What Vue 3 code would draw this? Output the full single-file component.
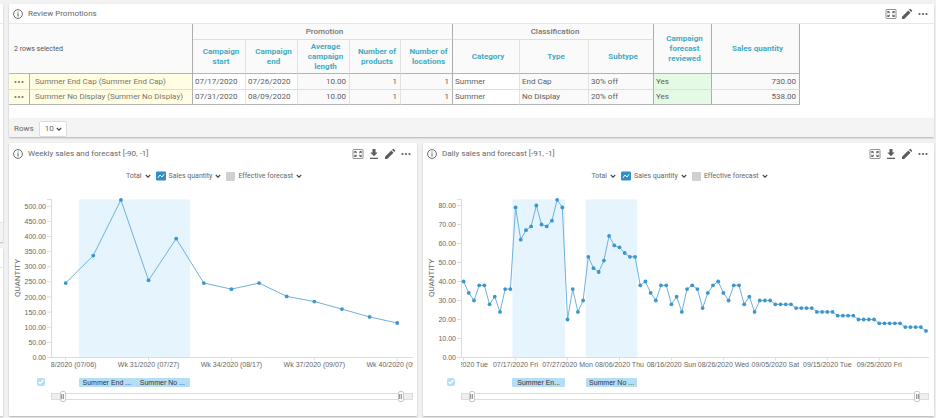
<script setup>
import { ref, reactive, onMounted, onBeforeUnmount } from 'vue'

const rowsPerPage = ref('10')

const columnWidths = [21, 163, 53, 52, 52, 51, 52, 67, 69, 65, 58, 88]

const promotions = [
  {
    name: 'Summer End Cap (Summer End Cap)', start: '07/17/2020', end: '07/26/2020', length: '10.00',
    products: 1, locations: 1, category: 'Summer', type: 'End Cap', subtype: '30% off', reviewed: 'Yes', sales: '730.00',
  },
  {
    name: 'Summer No Display (Summer No Display)', start: '07/31/2020', end: '08/09/2020', length: '10.00',
    products: 1, locations: 1, category: 'Summer', type: 'No Display', subtype: '20% off', reviewed: 'Yes', sales: '538.00',
  },
]

const PLOT_TOP = 17.5
const PLOT_BOTTOM = 175.5
const CHART_HEIGHT = 190

const charts = reactive([
  {
    id: 'weekly',
    title: 'Weekly sales and forecast [-90, -1]',
    width: 408,
    left: 42,
    right: 4,
    domain: [-0.53, 12.57],
    unit: 0.3025,
    yTicks: [0, 50, 100, 150, 200, 250, 300, 350, 400, 450, 500],
    values: [246, 337, 521, 255, 393, 246, 226, 246, 202, 185, 160, 134, 114],
    xTicks: [
      [0, 'Wk 28/2020 (07/06)'],
      [3, 'Wk 31/2020 (07/27)'],
      [6, 'Wk 34/2020 (08/17)'],
      [9, 'Wk 37/2020 (09/07)'],
      [12, 'Wk 40/2020 (09/28)'],
    ],
    bands: [
      { from: 0.48, to: 2.5, label: 'Summer End ...' },
      { from: 2.5, to: 4.5, label: 'Summer No ...' },
    ],
    shown: true,
    range: [2.4, 97.4],
  },
  {
    id: 'daily',
    title: 'Daily sales and forecast [-91, -1]',
    width: 511,
    left: 38,
    right: 5,
    domain: [-0.5, 89.57],
    unit: 1.9,
    yTicks: [0, 10, 20, 30, 40, 50, 60, 70, 80],
    values: [
      40, 34, 30, 38, 38, 28, 32, 24, 36, 36, 79, 62, 67, 69, 80, 70, 69, 72, 83, 79,
      20, 36, 24, 30, 53, 47, 45, 51, 64, 59, 58, 55, 53, 53, 38, 40, 34, 30, 38, 38,
      28, 32, 24, 36, 38, 36, 26, 34, 38, 40, 34, 30, 38, 38, 28, 32, 24, 30, 30, 30,
      28, 28, 28, 28, 26, 26, 26, 26, 24, 24, 24, 24, 22, 22, 22, 22, 20, 20, 20, 20,
      18, 18, 18, 18, 18, 16, 16, 16, 16, 14,
    ],
    xTicks: [
      [0, '07/07/2020 Tue'],
      [10, '07/17/2020 Fri'],
      [20, '07/27/2020 Mon'],
      [30, '08/06/2020 Thu'],
      [40, '08/16/2020 Sun'],
      [50, '08/26/2020 Wed'],
      [60, '09/05/2020 Sat'],
      [70, '09/15/2020 Tue'],
      [80, '09/25/2020 Fri'],
    ],
    bands: [
      { from: 9.4, to: 19.5, label: 'Summer En...' },
      { from: 23.5, to: 33.45, label: 'Summer No ...' },
    ],
    shown: true,
    range: [1.7, 98.1],
  },
])

const plotWidth = (c) => c.width - c.left - c.right
const fraction = (c, i) => (i - c.domain[0]) / (c.domain[1] - c.domain[0])
const xAt = (c, i) => c.left + fraction(c, i) * plotWidth(c)
const yAt = (c, v) => PLOT_BOTTOM - v * c.unit
const linePoints = (c) => c.values.map((v, i) => `${xAt(c, i)},${yAt(c, v)}`).join(' ')

// Each chip's left margin runs from the end of the chip before it.
const chipStyle = (c, n) => {
  const previous = n ? fraction(c, c.bands[n - 1].to) : 0
  const from = fraction(c, c.bands[n].from)
  const to = fraction(c, c.bands[n].to)
  return { marginLeft: `${(from - previous) * 100}%`, width: `${(to - from) * 100}%` }
}

const plots = ref([])
let observer

onMounted(() => {
  const measure = () => plots.value.forEach((el, i) => { charts[i].width = el.clientWidth })
  measure()
  observer = new ResizeObserver(measure)
  plots.value.forEach((el) => observer.observe(el))
})
onBeforeUnmount(() => observer?.disconnect())
</script>

<template>
  <svg class="symbols" aria-hidden="true">
    <symbol id="i-info" viewBox="0 0 12 12">
      <circle cx="6" cy="6" r="4.4" fill="none" stroke="currentColor" stroke-width=".9" />
      <path d="M5.5 5.3h1v3.2h-1zM5.5 3.4h1v1h-1z" fill="currentColor" />
    </symbol>
    <symbol id="i-full" viewBox="0 0 12 12">
      <rect x="1" y="1.5" width="10" height="9" rx=".6" fill="none" stroke="currentColor" stroke-width=".9" opacity=".75" />
      <path d="M2.3 3h2.5L4 3.8l1 1-.7.7-1-1-.9.9zM9.7 3v2.4l-.9-.9-1 1-.8-.7 1-1L7.2 3zM2.3 9V6.600l.9.9 1-1 .8.7-1 1 .8.8zM9.7 9H7.2l.8-.8-1-1 .7-.7 1 1 1-.9z" fill="currentColor" />
    </symbol>
    <symbol id="i-down" viewBox="0 0 12 12">
      <path d="M4.5 1h3v3.5h2.2L6 8.3 2.3 4.5h2.2zM2 9.8h8V11H2z" fill="currentColor" />
    </symbol>
    <symbol id="i-edit" viewBox="0 0 12 12">
      <path d="M1 11V8.8l6.3-6.3 2.2 2.2L3.2 11zM8 1.8l.9-.9q.4-.3.7 0l1.500 1.500q.3.4 0 .7l-.9.9z" fill="currentColor" />
    </symbol>
    <symbol id="i-more" viewBox="0 0 12 12">
      <g fill="currentColor">
        <circle cx="2.5" cy="6" r="1.1" />
        <circle cx="6" cy="6" r="1.1" />
        <circle cx="9.5" cy="6" r="1.1" />
      </g>
    </symbol>
    <symbol id="i-chevron" viewBox="0 0 6 6">
      <path d="M.8 2 3 4.2 5.2 2" fill="none" stroke="currentColor" stroke-width="1.1" />
    </symbol>
    <symbol id="i-series" viewBox="0 0 10 10">
      <rect width="10" height="9" y=".5" rx="1.2" fill="#2f8fc6" />
      <path d="M2 6.800 4 4l2 2 2.200-2.800" fill="none" stroke="#fff" stroke-width="1" />
    </symbol>
  </svg>

  <div class="page">
    <aside class="side">
      <section class="side-panel first"><div class="side-head"></div><div class="side-foot"></div></section>
      <section class="side-panel rest"><div class="side-head"></div></section>
    </aside>

    <main class="content">
      <section class="panel">
        <header class="panel-head ruled">
          <svg class="icon"><use href="#i-info" /></svg>
          <h2>Review Promotions</h2>
          <button class="tool" type="button" aria-label="Full screen"><svg class="icon"><use href="#i-full" /></svg></button>
          <button class="tool" type="button" aria-label="Edit"><svg class="icon"><use href="#i-edit" /></svg></button>
          <button class="tool" type="button" aria-label="More"><svg class="icon"><use href="#i-more" /></svg></button>
        </header>

        <div class="table-wrap">
          <table>
            <colgroup><col v-for="(w, i) in columnWidths" :key="i" :style="{ width: w + 'px' }" /></colgroup>
            <thead>
              <tr class="groups">
                <th class="selected edge base" colspan="2" rowspan="2">2 rows selected</th>
                <th class="edge" colspan="5">Promotion</th>
                <th class="edge" colspan="3">Classification</th>
                <th class="measure edge base" rowspan="2">Campaign forecast reviewed</th>
                <th class="measure edge base" rowspan="2">Sales quantity</th>
              </tr>
              <tr class="fields">
                <th class="measure base">Campaign start</th>
                <th class="measure base">Campaign end</th>
                <th class="measure base">Average campaign length</th>
                <th class="measure base">Number of products</th>
                <th class="measure base edge">Number of locations</th>
                <th class="measure base">Category</th>
                <th class="measure base">Type</th>
                <th class="measure base edge">Subtype</th>
              </tr>
            </thead>
            <tbody>
              <tr v-for="p in promotions" :key="p.name">
                <td class="marked edge action">
                  <button class="row-menu" type="button" :aria-label="'Actions for ' + p.name"><svg class="icon"><use href="#i-more" /></svg></button>
                </td>
                <td class="marked edge name">{{ p.name }}</td>
                <td class="open">{{ p.start }}</td>
                <td class="open">{{ p.end }}</td>
                <td class="num">{{ p.length }}</td>
                <td class="num">{{ p.products }}</td>
                <td class="num edge">{{ p.locations }}</td>
                <td class="open">{{ p.category }}</td>
                <td>{{ p.type }}</td>
                <td class="edge">{{ p.subtype }}</td>
                <td class="reviewed edge">{{ p.reviewed }}</td>
                <td class="num edge">{{ p.sales }}</td>
              </tr>
            </tbody>
          </table>
        </div>

        <footer class="pager">
          <label for="rows">Rows</label>
          <span class="select">
            <select id="rows" v-model="rowsPerPage">
              <option>10</option>
              <option>25</option>
              <option>50</option>
            </select>
            <svg class="chevron"><use href="#i-chevron" /></svg>
          </span>
        </footer>
      </section>

      <div class="charts">
        <section v-for="c in charts" :key="c.id" class="panel chart" :class="c.id">
          <header class="panel-head">
            <svg class="icon"><use href="#i-info" /></svg>
            <h2>{{ c.title }}</h2>
            <button class="tool" type="button" aria-label="Full screen"><svg class="icon"><use href="#i-full" /></svg></button>
            <button class="tool" type="button" aria-label="Download"><svg class="icon"><use href="#i-down" /></svg></button>
            <button class="tool" type="button" aria-label="Edit"><svg class="icon"><use href="#i-edit" /></svg></button>
            <button class="tool" type="button" aria-label="More"><svg class="icon"><use href="#i-more" /></svg></button>
          </header>

          <div class="legend">
            <button type="button">Total <svg class="chevron"><use href="#i-chevron" /></svg></button>
            <button type="button">
              <svg class="swatch"><use href="#i-series" /></svg>Sales quantity
              <svg class="chevron"><use href="#i-chevron" /></svg>
            </button>
            <button type="button">
              <span class="swatch off"></span>Effective forecast
              <svg class="chevron"><use href="#i-chevron" /></svg>
            </button>
          </div>

          <div ref="plots" class="plot">
            <svg :width="c.width" :height="CHART_HEIGHT" role="img" :aria-label="c.title">
              <defs>
                <clipPath :id="'clip-' + c.id">
                  <rect :x="c.left" y="175" :width="plotWidth(c)" height="15" />
                </clipPath>
              </defs>
              <rect
                v-for="b in c.bands" :key="b.label" class="band"
                :x="xAt(c, b.from)" :y="PLOT_TOP" :width="xAt(c, b.to) - xAt(c, b.from)" :height="PLOT_BOTTOM - PLOT_TOP"
              />
              <path
                class="axis"
                :d="`M${c.left - 4} ${PLOT_TOP}H${c.left + 0.5}V${PLOT_BOTTOM}M${c.left - 4} ${PLOT_BOTTOM}H${c.width - c.right}`"
              />
              <g v-for="t in c.yTicks" :key="t">
                <path class="axis" :d="`M${c.left - 4} ${yAt(c, t)}h4`" />
                <text :x="c.left - 5" :y="yAt(c, t) + 2.5" text-anchor="end">{{ t.toFixed(2) }}</text>
              </g>
              <g :clip-path="`url(#clip-${c.id})`">
                <g v-for="[i, label] in c.xTicks" :key="label">
                  <path class="axis" :d="`M${xAt(c, i)} ${PLOT_BOTTOM}v3`" />
                  <text :x="xAt(c, i)" y="185" text-anchor="middle">{{ label }}</text>
                </g>
              </g>
              <text class="axis-title" transform="translate(11 96) rotate(-90)" text-anchor="middle">QUANTITY</text>
              <polyline class="line" :points="linePoints(c)" />
              <circle v-for="(v, i) in c.values" :key="i" class="dot" :cx="xAt(c, i)" :cy="yAt(c, v)" r="1.9" />
            </svg>
          </div>

          <div class="timeline">
            <input v-model="c.shown" class="toggle" type="checkbox" aria-label="Show promotions" />
            <div class="chips">
              <button v-for="(b, n) in c.bands" :key="b.label" class="chip" type="button" :style="chipStyle(c, n)">{{ b.label }}</button>
            </div>
            <div class="range">
              <div class="track">
                <span :style="{ width: c.range[0] + '%' }"></span>
                <span :style="{ width: 100 - c.range[1] + '%' }"></span>
              </div>
              <input v-model.number="c.range[0]" type="range" min="0" max="100" step="0.1" aria-label="Range start" />
              <input v-model.number="c.range[1]" type="range" min="0" max="100" step="0.1" aria-label="Range end" />
            </div>
          </div>
        </section>
      </div>
    </main>
  </div>
</template>

<style>
body {
  background: #f2f2f2;
}
</style>

<style scoped>
.symbols {
  position: absolute;
  width: 0;
  height: 0;
}
.page {
  display: grid;
  grid-template-columns: 3px minmax(0, 1fr);
  gap: 6px;
  box-sizing: border-box;
  min-height: 100vh;
  padding: 4px 2px 2px 0;
  color: #666;
  font: 8px/10px Roboto, "Liberation Sans", sans-serif;
}
button,
select,
input {
  margin: 0;
  padding: 0;
  border: 0;
  background: none;
  color: inherit;
  font: inherit;
}
.side {
  display: flex;
  flex-direction: column;
  gap: 6px;
}
.side-panel {
  display: flex;
  flex-direction: column;
  justify-content: space-between;
  background: #fff;
  box-shadow: 0 1px 2px #0004;
}
.first {
  flex: 0 0 238px;
}
.rest {
  flex: 1;
}
.side-head {
  height: 19px;
  border-bottom: 1px solid #e8e8e8;
}
.side-foot {
  height: 19px;
  background: #f4f4f4;
  border-top: 1px solid #e8e8e8;
}
.content {
  display: flex;
  flex-direction: column;
  gap: 6px;
  min-width: 0;
}
.panel {
  min-width: 0;
  border-radius: 1px;
  background: #fff;
  box-shadow: 0 1px 2px #0004;
}
.panel-head {
  display: flex;
  align-items: center;
  gap: 4px;
  box-sizing: border-box;
  height: 21px;
  padding: 0 5px 0 3px;
}
.panel-head.ruled {
  height: 20px;
  border-bottom: 1px solid #e8e8e8;
}
.panel-head h2 {
  flex: 1;
  margin: 0;
  font-size: 8px;
  font-weight: 400;
}
.icon {
  display: block;
  flex: none;
  width: 12px;
  height: 12px;
  color: #5c5c5c;
}
.tool {
  flex: none;
}

.table-wrap {
  padding-bottom: 13px;
  overflow: hidden;
}
table {
  width: 791px;
  table-layout: fixed;
  border-spacing: 0;
}
th,
td {
  box-sizing: border-box;
  border-right: 1px solid #e2e2e2;
  border-bottom: 1px solid #dedede;
  background: #fafafa;
}
th {
  padding: 0 0 0 4px;
  color: #757575;
  font-weight: 500;
}
.groups th {
  height: 16px;
}
.fields th {
  height: 34px;
}
th.measure {
  color: #43aac3;
  font-weight: 700;
}
th.selected {
  padding-left: 5px;
  font-size: 7px;
  font-weight: 400;
  text-align: left;
  color: #555;
}
th.base {
  border-bottom-color: #b4b4b4;
}
td {
  height: 16px;
  padding: 0 3px 0 2px;
  white-space: nowrap;
  color: #5c5c5c;
}
tbody tr:last-child td {
  height: 15px;
  border-bottom-color: #b4b4b4;
}
th.edge,
td.edge {
  border-right-color: #adadad;
}
td.open {
  background: #fff;
}
td.marked {
  background: #fffde2;
  color: #77776c;
}
td.action {
  padding: 0 0 0 4px;
}
td.name {
  padding-left: 5px;
}
td.reviewed {
  background: #e4fae4;
}
.num {
  text-align: right;
}
.row-menu {
  display: block;
}
.row-menu .icon {
  color: #77776c;
}

.pager {
  display: flex;
  align-items: center;
  gap: 5px;
  box-sizing: border-box;
  height: 19px;
  padding: 2px 5px 0;
  background: #f4f4f4;
}
.select {
  display: grid;
  align-items: center;
  box-sizing: border-box;
  width: 28px;
  height: 16px;
  border: 1px solid #dcdcdc;
  border-radius: 2px;
  background: #fff;
}
.select > * {
  grid-area: 1 / 1;
}
.select select {
  width: 100%;
  height: 14px;
  padding-left: 5px;
  appearance: none;
}
.select .chevron {
  justify-self: end;
  margin-right: 4px;
  pointer-events: none;
}
.chevron {
  display: block;
  width: 6px;
  height: 6px;
  color: #444;
}

.charts {
  display: grid;
  grid-template-columns: minmax(0, 408fr) minmax(0, 511fr);
  gap: 6px;
}
.chart {
  padding-bottom: 14px;
}
.legend {
  display: flex;
  justify-content: center;
  gap: 5px;
  height: 12px;
  margin-top: 6px;
  padding-left: 2px;
  font-size: 7px;
  line-height: 12px;
}
.legend button {
  display: flex;
  align-items: center;
  gap: 3px;
}
.swatch {
  width: 10px;
  height: 10px;
}
.swatch.off {
  width: 9px;
  height: 9px;
  border-radius: 1px;
  background: #d0d0d0;
}
.plot {
  overflow: hidden;
}
.plot svg {
  display: block;
}
.plot text {
  fill: #666;
  font: 7px "Liberation Sans", Arial, sans-serif;
}
.plot .axis-title {
  font: 8px Roboto, sans-serif;
}
.band {
  fill: #e6f4fd;
}
.axis {
  fill: none;
  stroke: #dcdcdc;
}
.line {
  fill: none;
  stroke: #6fb1da;
  stroke-width: 1;
}
.dot {
  fill: #3c96cb;
}

.timeline {
  display: grid;
  grid-template-columns: 42px minmax(0, 1fr);
  row-gap: 4px;
  margin-top: 6px;
  padding-right: 4px;
}
.daily .timeline {
  grid-template-columns: 38px minmax(0, 1fr);
  padding-right: 5px;
}
.toggle {
  display: grid;
  place-items: center;
  justify-self: end;
  width: 8px;
  height: 8px;
  margin-right: 6px;
  border-radius: 2px;
  background: #b3def6;
  appearance: none;
}
.toggle:checked::before {
  content: "";
  width: 6px;
  height: 6px;
  background: #fff;
  clip-path: polygon(0 55%, 17% 38%, 36% 58%, 83% 8%, 100% 25%, 36% 92%);
}
.chips {
  display: flex;
  height: 9px;
}
.chip {
  flex: none;
  overflow: hidden;
  border-radius: 1px;
  background: #b3def6;
  color: #333;
  font: 7px/9px "Liberation Sans", Arial, sans-serif;
  white-space: nowrap;
}
.range {
  display: grid;
  grid-column: 2;
  align-items: center;
  height: 11px;
}
.range > * {
  grid-area: 1 / 1;
}
.track {
  display: flex;
  justify-content: space-between;
  box-sizing: border-box;
  height: 7px;
  border: 1px solid #dcdcdc;
}
.track span {
  background: #efefef;
}
.range input {
  width: 100%;
  height: 11px;
  appearance: none;
  pointer-events: none;
}
.range input::-webkit-slider-thumb {
  box-sizing: border-box;
  width: 6px;
  height: 11px;
  border: 1px solid #c8c8c8;
  border-radius: 2px;
  background: linear-gradient(90deg, #999 1px, #ddd 1px 2px, #999 2px) center / 3px 5px no-repeat #fff;
  appearance: none;
  pointer-events: auto;
}
</style>
